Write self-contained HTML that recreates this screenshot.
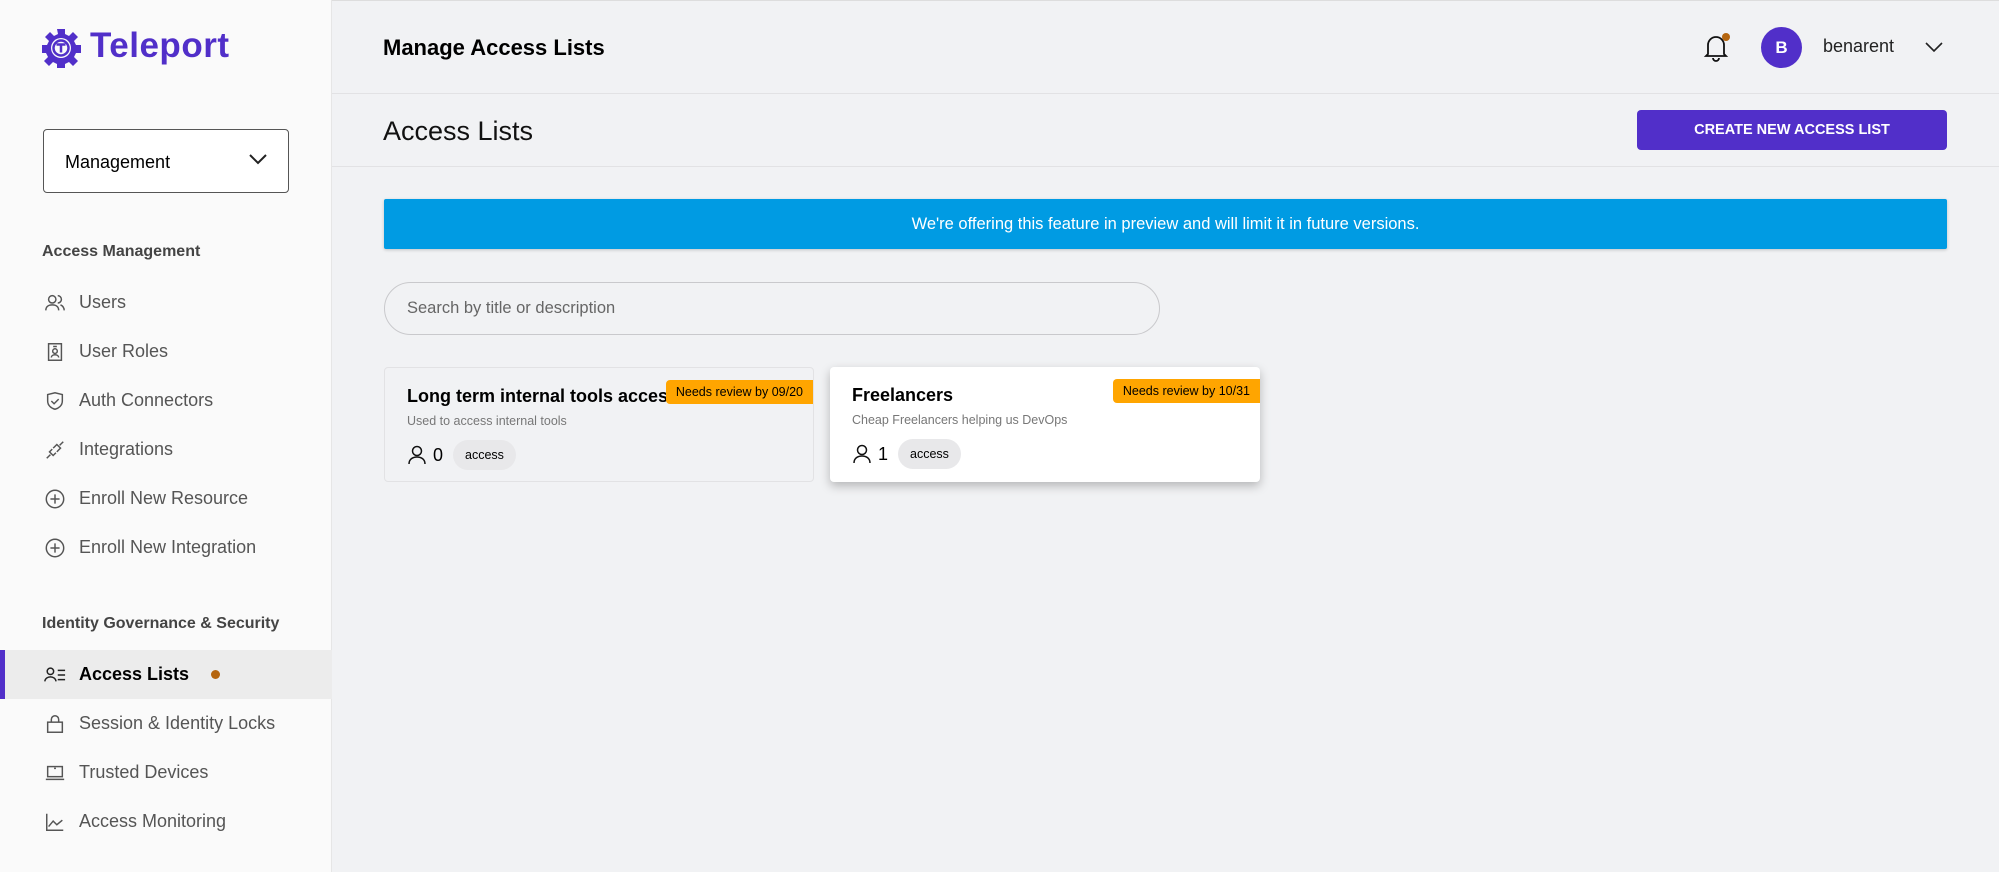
<!DOCTYPE html>
<html><head><meta charset="utf-8"><style>
*{box-sizing:border-box;margin:0;padding:0}
body{width:1999px;height:872px;overflow:hidden;background:#f1f2f4;font-family:"Liberation Sans",sans-serif;color:#000;position:relative}
.abs{position:absolute}
#side{left:0;top:0;width:332px;height:872px;background:#fafafa;border-right:1px solid #e6e6e6}
.item{position:absolute;left:0;width:332px;height:49px;display:flex;align-items:center;padding-left:44px;font-size:18px;color:#555}
.item svg{width:22px;height:22px;margin-right:13px;stroke:#555;fill:none;stroke-width:1.6}
.hdr{position:absolute;left:42px;font-size:16px;font-weight:bold;color:#444}
.card{position:absolute;top:367px;width:430px;height:115px;border-radius:4px}
.badge{position:absolute;right:0;top:12px;background:#ffa500;font-size:12.5px;padding:5px 10px;border-radius:4px 0 0 4px;height:24px}
.ct{position:absolute;left:22px;top:18px;font-size:18px;font-weight:bold}
.cd{position:absolute;left:22px;top:46px;font-size:12.5px;color:#777}
.cm{position:absolute;left:22px;top:72px;display:flex;align-items:center;font-size:18px}
.tag{margin-left:10px;background:#e8e8ea;border-radius:15px;font-size:12.5px;padding:8px 12px}
</style></head><body>
<div class="abs" style="left:0;top:0;width:1999px;height:1px;background:#ddd"></div>
<div id="side" class="abs">
 <svg class="abs" style="left:41px;top:28px" width="40" height="40" viewBox="0 0 40 40"><path fill="#512fc9" d="M16 1h8v5l4 2 4-4 5 5-4 4 2 4h5v8h-5l-2 4 4 4-5 5-4-4-4 2v5h-8v-5l-4-2-4 4-5-5 4-4-2-4H1v-8h5l2-4-4-4 5-5 4 4 4-2z"/><circle cx="20" cy="20" r="10" fill="#fafafa"/><circle cx="20" cy="20" r="7.5" fill="none" stroke="#512fc9" stroke-width="2.5"/><path d="M15.5 16.5h9M20 16.5v8" stroke="#512fc9" stroke-width="2.5"/></svg>
 <div class="abs" style="left:90px;top:26px;font-size:35px;font-weight:bold;color:#512fc9;letter-spacing:0.5px">Teleport</div>
 <div class="abs" style="left:43px;top:129px;width:246px;height:64px;border:1.5px solid #555;border-radius:4px;background:#fff;font-size:18px;padding:22px 0 0 21px">Management
  <svg class="abs" style="right:20px;top:22px" width="20" height="14" viewBox="0 0 20 14"><path d="M2 3l8 8 8-8" stroke="#222" stroke-width="2" fill="none"/></svg></div>
 <div class="hdr" style="top:243px">Access Management</div>
 <div class="item" style="top:278px"><svg viewBox="0 0 24 24"><circle cx="9" cy="8" r="4"/><path d="M2 20c0-4 3-6 7-6s7 2 7 6M15 4a4 4 0 010 8M18 14c2 1 4 3 4 6"/></svg>Users</div>
 <div class="item" style="top:327px"><svg viewBox="0 0 24 24"><rect x="5" y="3" width="14" height="18"/><circle cx="12" cy="11" r="2.5"/><path d="M8 18c0-2 2-3 4-3s4 1 4 3M10 6h4"/></svg>User Roles</div>
 <div class="item" style="top:376px"><svg viewBox="0 0 24 24"><path d="M4 5l8-2 8 2v7c0 5-4 8-8 9-4-1-8-4-8-9z"/><path d="M8 12l3 3 5-5"/></svg>Auth Connectors</div>
 <div class="item" style="top:425px"><svg viewBox="0 0 24 24"><path d="M3 21l4-4M21 3l-4 4M9 11l-3 3 4 4 3-3M15 13l3-3-4-4-3 3M10 10l2-2M14 14l2-2"/></svg>Integrations</div>
 <div class="item" style="top:474px"><svg viewBox="0 0 24 24"><circle cx="12" cy="12" r="9.5"/><path d="M12 7v10M7 12h10"/></svg>Enroll New Resource</div>
 <div class="item" style="top:523px"><svg viewBox="0 0 24 24"><circle cx="12" cy="12" r="9.5"/><path d="M12 7v10M7 12h10"/></svg>Enroll New Integration</div>
 <div class="hdr" style="top:615px">Identity Governance &amp; Security</div>
 <div class="item" style="top:650px;background:#ececec;color:#000;font-weight:bold"><div class="abs" style="left:0;top:0;width:5px;height:49px;background:#512fc9"></div><svg viewBox="0 0 24 24" style="stroke:#222"><circle cx="7" cy="8" r="3.5"/><path d="M1 19c0-3 3-5 6-5s6 2 6 5M15 7h8M15 12h8M15 17h8"/></svg>Access Lists<span style="display:inline-block;width:9px;height:9px;border-radius:50%;background:#b5650f;margin-left:22px"></span></div>
 <div class="item" style="top:699px"><svg viewBox="0 0 24 24"><rect x="4" y="10" width="16" height="11"/><path d="M8 10V7a4 4 0 018 0v3"/></svg>Session &amp; Identity Locks</div>
 <div class="item" style="top:748px"><svg viewBox="0 0 24 24"><rect x="4" y="5" width="16" height="11"/><path d="M2 19h20M11 7h2"/></svg>Trusted Devices</div>
 <div class="item" style="top:797px"><svg viewBox="0 0 24 24"><path d="M3 3v18h18M5 17l5-6 4 4 6-5"/></svg>Access Monitoring</div>
</div>
<div class="abs" style="left:383px;top:35px;font-size:22px;font-weight:bold">Manage Access Lists</div>
<svg class="abs" style="left:1702px;top:32px" width="28" height="30" viewBox="0 0 28 30"><path d="M6 22V13a8 8 0 0116 0v9l2 2H4zM11 26a3 3 0 006 0" stroke="#111" stroke-width="1.8" fill="none"/><circle cx="24" cy="5" r="4" fill="#b5650f"/></svg>
<div class="abs" style="left:1761px;top:27px;width:41px;height:41px;border-radius:50%;background:#512fc9;color:#fff;font-weight:bold;font-size:17px;text-align:center;line-height:41px">B</div>
<div class="abs" style="left:1823px;top:36px;font-size:18px;color:#222">benarent</div>
<svg class="abs" style="left:1924px;top:40px" width="20" height="14" viewBox="0 0 20 14"><path d="M2 3l8 8 8-8" stroke="#222" stroke-width="1.6" fill="none"/></svg>
<div class="abs" style="left:332px;top:93px;width:1667px;height:1px;background:#e2e2e4"></div>
<div class="abs" style="left:383px;top:116px;font-size:27px;color:#111">Access Lists</div>
<div class="abs" style="left:1637px;top:110px;width:310px;height:40px;background:#512fc9;border-radius:4px;color:#fff;font-weight:bold;font-size:14.5px;text-align:center;line-height:40px">CREATE NEW ACCESS LIST</div>
<div class="abs" style="left:332px;top:166px;width:1667px;height:1px;background:#e2e2e4"></div>
<div class="abs" style="left:384px;top:199px;width:1563px;height:50px;background:#009be3;color:#fff;font-size:16.5px;text-align:center;line-height:50px;border-radius:2px;box-shadow:0 1px 3px rgba(0,0,0,.2)">We're offering this feature in preview and will limit it in future versions.</div>
<div class="abs" style="left:384px;top:282px;width:776px;height:53px;border:1.5px solid #c9c9cc;border-radius:27px;font-size:16.5px;color:#666;padding:16px 0 0 22px">Search by title or description</div>
<div class="card" style="left:384px;border:1.5px solid #e2e2e4">
 <div class="ct" style="width:260px;overflow:hidden;white-space:nowrap">Long term internal tools access</div>
 <div class="badge">Needs review by 09/20</div>
 <div class="cd">Used to access internal tools</div>
 <div class="cm"><svg width="20" height="20" viewBox="0 0 20 20"><circle cx="10" cy="6" r="4.5" stroke="#111" stroke-width="1.5" fill="none"/><path d="M2 19c0-5 4-7 8-7s8 2 8 7" stroke="#111" stroke-width="1.5" fill="none"/></svg><span style="margin-left:6px">0</span><span class="tag">access</span></div>
</div>
<div class="card" style="left:830px;background:#fff;box-shadow:0 4px 10px rgba(0,0,0,.25)">
 <div class="ct">Freelancers</div>
 <div class="badge">Needs review by 10/31</div>
 <div class="cd">Cheap Freelancers helping us DevOps</div>
 <div class="cm"><svg width="20" height="20" viewBox="0 0 20 20"><circle cx="10" cy="6" r="4.5" stroke="#111" stroke-width="1.5" fill="none"/><path d="M2 19c0-5 4-7 8-7s8 2 8 7" stroke="#111" stroke-width="1.5" fill="none"/></svg><span style="margin-left:6px">1</span><span class="tag">access</span></div>
</div>
</body></html>
